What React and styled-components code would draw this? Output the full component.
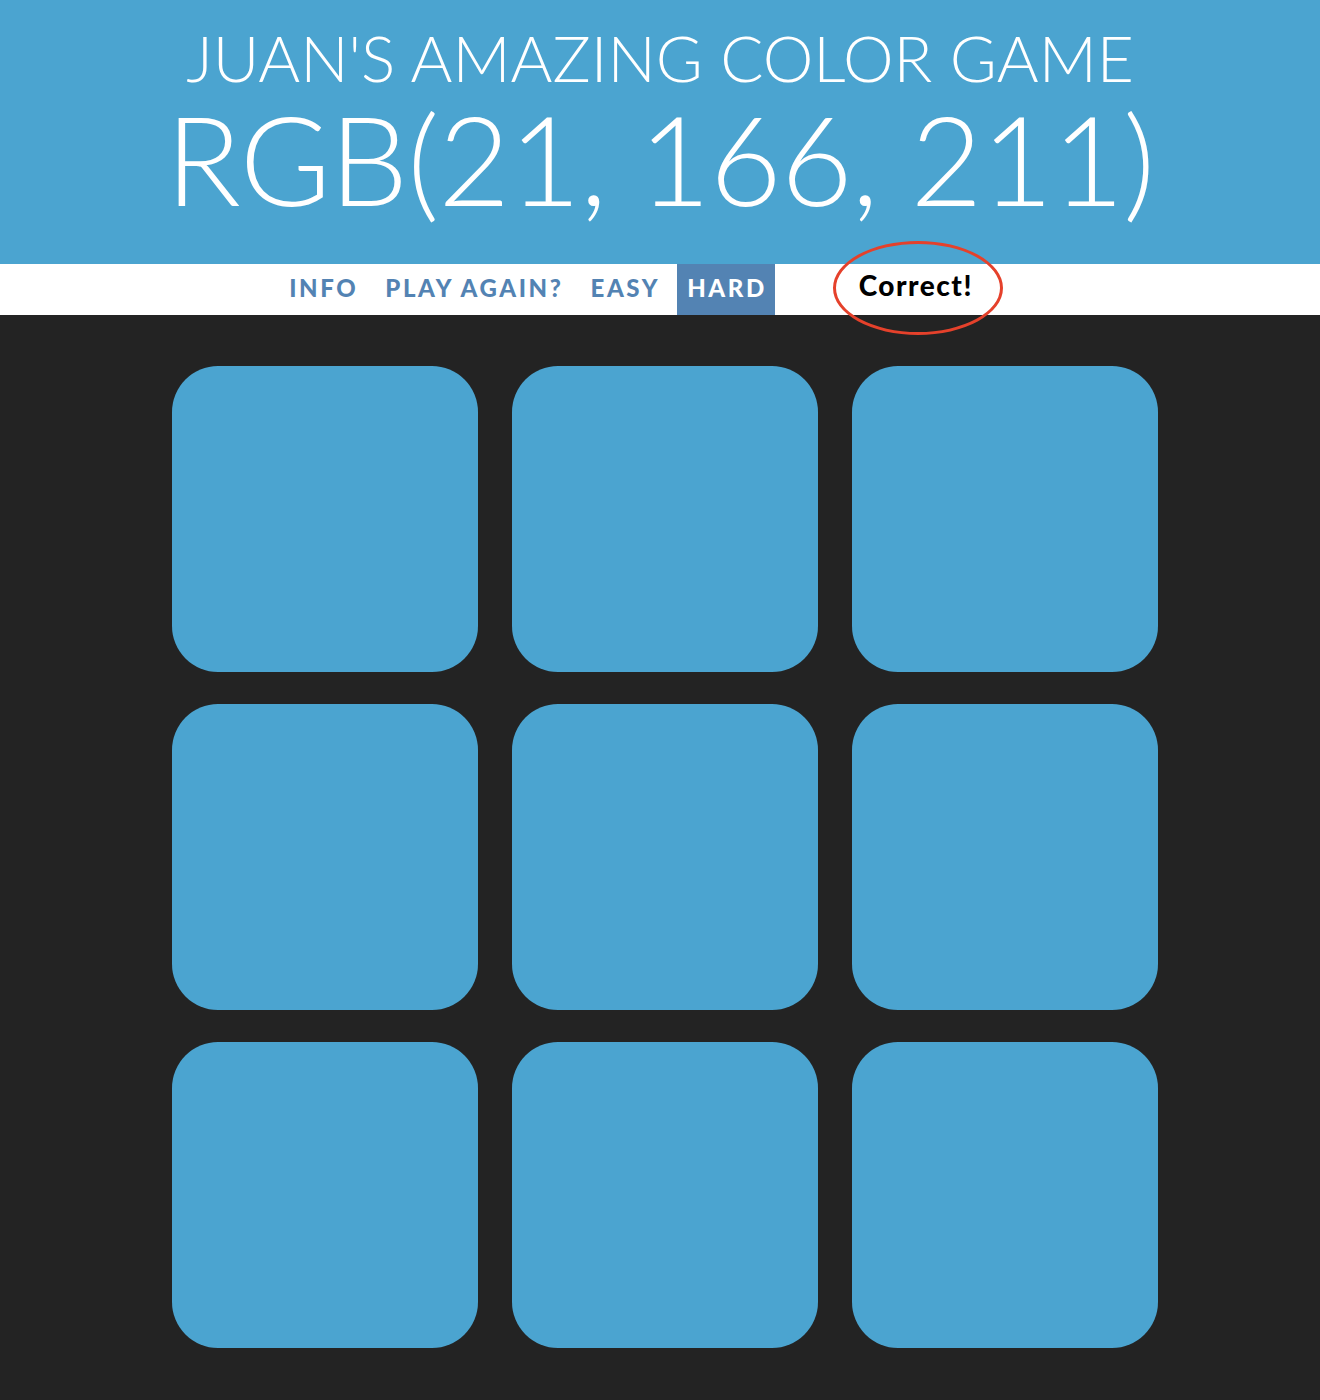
import React from "react";
import styled, { createGlobalStyle } from "styled-components";

const GlobalStyle = createGlobalStyle`
  body {
    margin: 0;
    background: #232323;
    font-family: Lato, "Open Sans", sans-serif;
  }
`;

const Header = styled.h1`
  margin: 0;
  height: 264px;
  background: #4ba4d0;
  color: #fff;
  text-align: center;
  font-weight: 300;
  text-transform: uppercase;
  padding-top: 26px;
  box-sizing: border-box;
`;

const Title = styled.span`
  display: block;
  font-size: 64px;
  line-height: 64px;
`;

const ColorDisplay = styled.span`
  display: block;
  margin-top: 6px;
  font-size: 124px;
  line-height: 124px;
  letter-spacing: -1px;
`;

const Stripe = styled.div`
  height: 51px;
  background: #fff;
  display: flex;
  justify-content: center;
  align-items: stretch;
  gap: 9px;
`;

const NavButton = styled.button`
  border: none;
  margin: 0;
  padding: 0 8px 4px 10px;
  background: ${p => (p.selected ? "#5383b3" : "none")};
  color: ${p => (p.selected ? "#fff" : "#5383b3")};
  font-family: Lato, sans-serif;
  font-weight: 900;
  font-size: 24px;
  letter-spacing: 2.6px;
  text-transform: uppercase;
  cursor: pointer;
`;

const Message = styled.span`
  position: relative;
  width: 250px;
  margin-left: 7px;
  display: flex;
  align-items: center;
  justify-content: center;
  color: #000;
  font-weight: 900;
  font-size: 28px;
  letter-spacing: 1.5px;
  padding-bottom: 10px;
  box-sizing: border-box;
`;

const Circle = styled.span`
  position: absolute;
  left: 50%;
  top: -23px;
  width: 164px;
  height: 88px;
  margin-left: -83px;
  border: 3px solid #e5412b;
  border-radius: 50%;
`;

const Board = styled.div`
  display: grid;
  grid-template-columns: repeat(3, 306px);
  column-gap: 34px;
  row-gap: 32px;
  justify-content: center;
  padding: 51px 0 0 10px;
`;

const Square = styled.div`
  height: 306px;
  border-radius: 46px;
  background: ${p => p.color};
`;

const colors = Array(9).fill("#4ba4d0");

export default function App() {
  return (
    <>
      <GlobalStyle />
      <Header>
        <Title>Juan's Amazing Color Game</Title>
        <ColorDisplay>RGB(21, 166, 211)</ColorDisplay>
      </Header>
      <Stripe>
        <NavButton>Info</NavButton>
        <NavButton>Play Again?</NavButton>
        <NavButton>Easy</NavButton>
        <NavButton selected>Hard</NavButton>
        <Message>
          Correct!
          <Circle />
        </Message>
      </Stripe>
      <Board>
        {colors.map((c, i) => (
          <Square key={i} color={c} />
        ))}
      </Board>
    </>
  );
}
